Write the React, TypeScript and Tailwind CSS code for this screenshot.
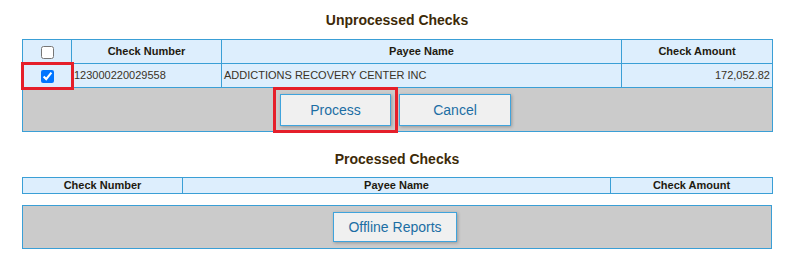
import React from 'react';

const font = "font-['Liberation_Sans',Arial,sans-serif]";

function Btn({ label, w, h, marked }: { label: string; w: string; h: string; marked?: boolean }) {
  return (
    <button
      className={`${w} ${h} bg-[#f0f0f0] border border-[#3fa3dc] text-[#1c6ea4] text-[14px] shadow-[1px_1px_3px_rgba(0,0,0,0.25)] ${
        marked ? 'outline-[3px] outline-solid outline-[#e51f2a] outline-offset-[4px]' : ''
      }`}
    >
      {label}
    </button>
  );
}

export default function App() {
  const cell = 'border border-[#3a9fd6] bg-[#ddeefd]';
  return (
    <div className={`${font} w-[788px] h-[253px] bg-white pt-[12px]`}>
      <div className="ml-[22px] w-[750px]">
        <h2 className="text-center text-[14px] font-bold text-[#3d2a08] h-[17px] leading-[17px]">Unprocessed Checks</h2>
        <table className="mt-[10px] w-[750px] border-collapse table-fixed text-[11px]">
          <colgroup>
            <col className="w-[49px]" />
            <col className="w-[150px]" />
            <col className="w-[400px]" />
            <col className="w-[151px]" />
          </colgroup>
          <thead>
            <tr className="h-[24px] text-[#1e1a10] font-bold">
              <th className={cell}>
                <input type="checkbox" className="align-middle m-0 w-[13px] h-[13px]" />
              </th>
              <th className={cell}>Check Number</th>
              <th className={cell}>Payee Name</th>
              <th className={cell}>Check Amount</th>
            </tr>
          </thead>
          <tbody>
            <tr className="h-[24px] text-[#3a3226]">
              <td className={`${cell} text-center outline-[3px] outline-solid outline-[#e51f2a] -outline-offset-[1px]`}>
                <input type="checkbox" defaultChecked className="align-middle m-0 w-[13px] h-[13px] accent-[#0075ff]" />
              </td>
              <td className={`${cell} pl-[2px]`}>123000220029558</td>
              <td className={`${cell} pl-[2px]`}>ADDICTIONS RECOVERY CENTER INC</td>
              <td className={`${cell} text-right pr-[2px]`}>172,052.82</td>
            </tr>
            <tr className="h-[44px]">
              <td colSpan={4} className="border border-[#3a9fd6] bg-[#cbcbcb] p-0">
                <div className="flex justify-center gap-[8px] pr-[4px] pt-[1px]">
                  <Btn label="Process" w="w-[111px]" h="h-[32px]" marked />
                  <Btn label="Cancel" w="w-[112px]" h="h-[32px]" />
                </div>
              </td>
            </tr>
          </tbody>
        </table>

        <h2 className="mt-[19px] text-center text-[14px] font-bold text-[#3d2a08] h-[17px] leading-[17px]">Processed Checks</h2>
        <table className="mt-[9px] w-[750px] border-collapse table-fixed text-[11px]">
          <colgroup>
            <col className="w-[160px]" />
            <col className="w-[428px]" />
            <col className="w-[162px]" />
          </colgroup>
          <thead>
            <tr className="h-[16px] text-[#1e1a10] font-bold">
              <th className={`${cell} p-0 leading-[13px]`}>Check Number</th>
              <th className={`${cell} p-0 leading-[13px]`}>Payee Name</th>
              <th className={`${cell} p-0 leading-[13px]`}>Check Amount</th>
            </tr>
          </thead>
        </table>

        <div className="mt-[11px] w-[750px] h-[44px] border border-[#3a9fd6] bg-[#cbcbcb] flex items-center justify-center pr-[4px]">
          <Btn label="Offline Reports" w="w-[124px]" h="h-[30px]" />
        </div>
      </div>
    </div>
  );
}
